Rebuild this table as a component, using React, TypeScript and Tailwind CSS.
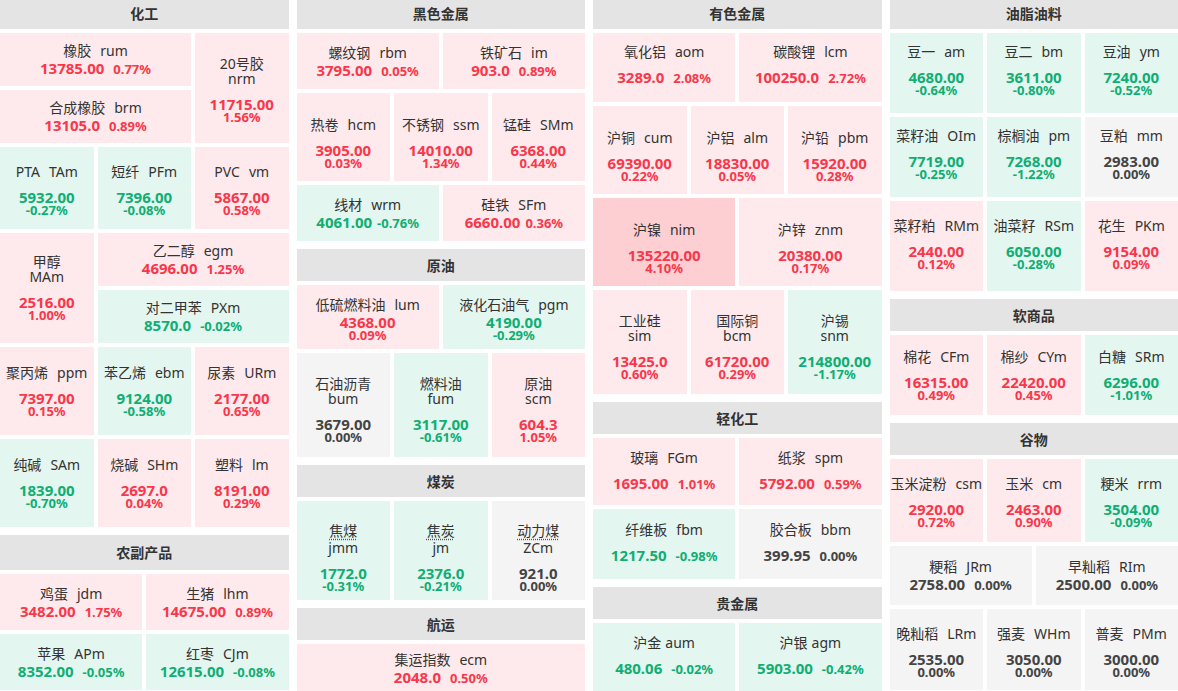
import React from 'react';

type Trend = 'up' | 'down' | 'flat' | 'hot';

interface Q {
  n: string;
  c: string;
  p: string;
  r: string;
  t: Trend;
  stack?: boolean; // name and code on two lines
  inline?: boolean; // price and change on one row
  tight?: boolean; // small gap under the name
  one?: boolean; // single space between name and code
  dot?: boolean; // dotted underline on the name
  ng?: boolean; // narrow gap between price and change
}

const bg: Record<Trend, string> = {
  up: 'bg-[#feeaec]',
  down: 'bg-[#e3f6ef]',
  flat: 'bg-[#f4f4f4]',
  hot: 'bg-[#fdcfd2]',
};

const fg: Record<Trend, string> = {
  up: 'text-[#f8374b]',
  down: 'text-[#0fae74]',
  flat: 'text-[#444444]',
  hot: 'text-[#f8374b]',
};

const Tile = ({ q, pad = '' }: { q: Q; pad?: string }) => (
  <div
    className={`${bg[q.t]} ${pad} flex flex-col items-center justify-center text-center whitespace-nowrap overflow-hidden`}
  >
    <div className="text-[14px] leading-[15px] text-[#333333]">
      {q.stack ? (
        <>
          <div>
            <span className={q.dot ? 'underline decoration-dotted decoration-[#555555] underline-offset-[3px]' : ''}>
              {q.n}
            </span>
          </div>
          <div className={q.dot ? 'mt-[2px]' : ''}>{q.c}</div>
        </>
      ) : (
        <>
          {q.n}
          <span className={q.one ? 'ml-1' : 'ml-[9px]'}>{q.c}</span>
        </>
      )}
    </div>
    {q.inline ? (
      <div
        className={`flex items-baseline font-bold ${fg[q.t]} ${q.tight ? 'mt-1' : 'mt-3'} ${q.ng ? 'gap-[5px]' : 'gap-[9px]'}`}
      >
        <span className="text-[15px] leading-[13px]">{q.p}</span>
        <span className="text-[13px] leading-[13px]">{q.r}</span>
      </div>
    ) : (
      <div className={`flex flex-col items-center font-bold ${fg[q.t]} ${q.tight ? 'mt-1' : 'mt-3'}`}>
        <span className="text-[15px] leading-[13px]">{q.p}</span>
        <span className="text-[13px] leading-[13px]">{q.r}</span>
      </div>
    )}
  </div>
);

const Head = ({ title, h = 'h-8' }: { title: string; h?: string }) => (
  <div className={`${h} flex items-center justify-center bg-[#e4e4e4] text-[14px] font-bold text-[#333333]`}>
    {title}
  </div>
);

const Row = ({ h, cols, items, pad }: { h: string; cols: string; items: Q[]; pad?: string }) => (
  <div className={`grid ${cols} gap-1 ${h}`}>
    {items.map((q) => (
      <Tile key={q.c} q={q} pad={pad} />
    ))}
  </div>
);

const Section = ({ title, h, children }: { title: string; h?: string; children: React.ReactNode }) => (
  <div className="flex flex-col gap-1">
    <Head title={title} h={h} />
    {children}
  </div>
);

const C2 = 'grid-cols-2';
const C3 = 'grid-cols-3';

export default function App() {
  return (
    <div className="h-[691px] overflow-hidden bg-white font-['Noto_Sans','Noto_Sans_CJK_SC',sans-serif]">
      <div className="grid grid-cols-4 gap-x-2 -mt-[3px] items-start">
        {/* 化工 + 农副产品 */}
        <div className="flex flex-col gap-2">
          <Section title="化工">
            <div className="grid grid-cols-3 gap-1 h-[110px]">
              <div className="col-span-2 grid grid-rows-2 gap-1">
                <Tile q={{ n: '橡胶', c: 'rum', p: '13785.00', r: '0.77%', t: 'up', inline: true, tight: true }} />
                <Tile q={{ n: '合成橡胶', c: 'brm', p: '13105.0', r: '0.89%', t: 'up', inline: true, tight: true }} />
              </div>
              <Tile q={{ n: '20号胶', c: 'nrm', p: '11715.00', r: '1.56%', t: 'up', stack: true }} pad="pt-[3px]" />
            </div>
            <Row
              h="h-[82px]"
              cols={C3}
              pad="pt-[5px]"
              items={[
                { n: 'PTA', c: 'TAm', p: '5932.00', r: '-0.27%', t: 'down' },
                { n: '短纤', c: 'PFm', p: '7396.00', r: '-0.08%', t: 'down' },
                { n: 'PVC', c: 'vm', p: '5867.00', r: '0.58%', t: 'up' },
              ]}
            />
            <div className="grid grid-cols-3 gap-1 h-[110px]">
              <Tile q={{ n: '甲醇', c: 'MAm', p: '2516.00', r: '1.00%', t: 'up', stack: true }} />
              <div className="col-span-2 grid grid-rows-2 gap-1">
                <Tile q={{ n: '乙二醇', c: 'egm', p: '4696.00', r: '1.25%', t: 'up', inline: true, tight: true }} />
                <Tile q={{ n: '对二甲苯', c: 'PXm', p: '8570.0', r: '-0.02%', t: 'down', inline: true, tight: true }} />
              </div>
            </div>
            <Row
              h="h-[88px]"
              cols={C3}
              items={[
                { n: '聚丙烯', c: 'ppm', p: '7397.00', r: '0.15%', t: 'up' },
                { n: '苯乙烯', c: 'ebm', p: '9124.00', r: '-0.58%', t: 'down' },
                { n: '尿素', c: 'URm', p: '2177.00', r: '0.65%', t: 'up' },
              ]}
            />
            <Row
              h="h-[88px]"
              cols={C3}
              items={[
                { n: '纯碱', c: 'SAm', p: '1839.00', r: '-0.70%', t: 'down' },
                { n: '烧碱', c: 'SHm', p: '2697.0', r: '0.04%', t: 'up' },
                { n: '塑料', c: 'lm', p: '8191.00', r: '0.29%', t: 'up' },
              ]}
            />
          </Section>
          <Section title="农副产品" h="h-[35px]">
            <Row
              h="h-[56px]"
              cols={C2}
              items={[
                { n: '鸡蛋', c: 'jdm', p: '3482.00', r: '1.75%', t: 'up', inline: true, tight: true },
                { n: '生猪', c: 'lhm', p: '14675.00', r: '0.89%', t: 'up', inline: true, tight: true },
              ]}
            />
            <Row
              h="h-[56px]"
              cols={C2}
              items={[
                { n: '苹果', c: 'APm', p: '8352.00', r: '-0.05%', t: 'down', inline: true, tight: true },
                { n: '红枣', c: 'CJm', p: '12615.00', r: '-0.08%', t: 'down', inline: true, tight: true },
              ]}
            />
          </Section>
        </div>

        {/* 黑色金属 + 原油 + 煤炭 + 航运 */}
        <div className="flex flex-col gap-2">
          <Section title="黑色金属">
            <Row
              h="h-[56px]"
              cols={C2}
              items={[
                { n: '螺纹钢', c: 'rbm', p: '3795.00', r: '0.05%', t: 'up', inline: true, tight: true },
                { n: '铁矿石', c: 'im', p: '903.0', r: '0.89%', t: 'up', inline: true, tight: true },
              ]}
            />
            <Row
              h="h-[88px]"
              cols={C3}
              pad="pt-3"
              items={[
                { n: '热卷', c: 'hcm', p: '3905.00', r: '0.03%', t: 'up' },
                { n: '不锈钢', c: 'ssm', p: '14010.00', r: '1.34%', t: 'up' },
                { n: '锰硅', c: 'SMm', p: '6368.00', r: '0.44%', t: 'up' },
              ]}
            />
            <Row
              h="h-[56px]"
              cols={C2}
              items={[
                { n: '线材', c: 'wrm', p: '4061.00', r: '-0.76%', t: 'down', inline: true, tight: true, ng: true },
                { n: '硅铁', c: 'SFm', p: '6660.00', r: '0.36%', t: 'up', inline: true, tight: true, ng: true },
              ]}
            />
          </Section>
          <Section title="原油">
            <Row
              h="h-[64px]"
              cols={C2}
              pad="pt-[5px]"
              items={[
                { n: '低硫燃料油', c: 'lum', p: '4368.00', r: '0.09%', t: 'up', tight: true },
                { n: '液化石油气', c: 'pgm', p: '4190.00', r: '-0.29%', t: 'down', tight: true },
              ]}
            />
            <Row
              h="h-[104px]"
              cols={C3}
              pad="pt-[10px]"
              items={[
                { n: '石油沥青', c: 'bum', p: '3679.00', r: '0.00%', t: 'flat', stack: true },
                { n: '燃料油', c: 'fum', p: '3117.00', r: '-0.61%', t: 'down', stack: true },
                { n: '原油', c: 'scm', p: '604.3', r: '1.05%', t: 'up', stack: true },
              ]}
            />
          </Section>
          <Section title="煤炭">
            <Row
              h="h-[99px]"
              cols={C3}
              pad="pt-[14px]"
              items={[
                { n: '焦煤', c: 'jmm', p: '1772.0', r: '-0.31%', t: 'down', stack: true, dot: true },
                { n: '焦炭', c: 'jm', p: '2376.0', r: '-0.21%', t: 'down', stack: true, dot: true },
                { n: '动力煤', c: 'ZCm', p: '921.0', r: '0.00%', t: 'flat', stack: true, dot: true },
              ]}
            />
          </Section>
          <Section title="航运">
            <Row
              h="h-[48px]"
              cols="grid-cols-1"
              items={[{ n: '集运指数', c: 'ecm', p: '2048.0', r: '0.50%', t: 'up', inline: true, tight: true }]}
            />
          </Section>
        </div>

        {/* 有色金属 + 轻化工 + 贵金属 */}
        <div className="flex flex-col gap-2">
          <Section title="有色金属">
            <Row
              h="h-[69px]"
              cols={C2}
              pad="pb-[6px]"
              items={[
                { n: '氧化铝', c: 'aom', p: '3289.0', r: '2.08%', t: 'up', inline: true },
                { n: '碳酸锂', c: 'lcm', p: '100250.0', r: '2.72%', t: 'up', inline: true },
              ]}
            />
            <Row
              h="h-[88px]"
              cols={C3}
              pad="pt-3"
              items={[
                { n: '沪铜', c: 'cum', p: '69390.00', r: '0.22%', t: 'up' },
                { n: '沪铝', c: 'alm', p: '18830.00', r: '0.05%', t: 'up' },
                { n: '沪铅', c: 'pbm', p: '15920.00', r: '0.28%', t: 'up' },
              ]}
            />
            <Row
              h="h-[88px]"
              cols={C2}
              pad="pt-3"
              items={[
                { n: '沪镍', c: 'nim', p: '135220.00', r: '4.10%', t: 'hot' },
                { n: '沪锌', c: 'znm', p: '20380.00', r: '0.17%', t: 'up' },
              ]}
            />
            <Row
              h="h-[104px]"
              cols={C3}
              pad="pt-[10px]"
              items={[
                { n: '工业硅', c: 'sim', p: '13425.0', r: '0.60%', t: 'up', stack: true },
                { n: '国际铜', c: 'bcm', p: '61720.00', r: '0.29%', t: 'up', stack: true },
                { n: '沪锡', c: 'snm', p: '214800.00', r: '-1.17%', t: 'down', stack: true },
              ]}
            />
          </Section>
          <Section title="轻化工">
            <Row
              h="h-[67px]"
              cols={C2}
              pad="pb-[2px]"
              items={[
                { n: '玻璃', c: 'FGm', p: '1695.00', r: '1.01%', t: 'up', inline: true },
                { n: '纸浆', c: 'spm', p: '5792.00', r: '0.59%', t: 'up', inline: true },
              ]}
            />
            <Row
              h="h-[70px]"
              cols={C2}
              pad="pb-[4px]"
              items={[
                { n: '纤维板', c: 'fbm', p: '1217.50', r: '-0.98%', t: 'down', inline: true },
                { n: '胶合板', c: 'bbm', p: '399.95', r: '0.00%', t: 'flat', inline: true },
              ]}
            />
          </Section>
          <Section title="贵金属">
            <Row
              h="h-[70px]"
              cols={C2}
              pad="pb-[6px]"
              items={[
                { n: '沪金', c: 'aum', p: '480.06', r: '-0.02%', t: 'down', inline: true, one: true },
                { n: '沪银', c: 'agm', p: '5903.00', r: '-0.42%', t: 'down', inline: true, one: true },
              ]}
            />
          </Section>
        </div>

        {/* 油脂油料 + 软商品 + 谷物 */}
        <div className="flex flex-col gap-2">
          <Section title="油脂油料">
            <Row
              h="h-[80px]"
              cols={C3}
              pad="pb-[6px]"
              items={[
                { n: '豆一', c: 'am', p: '4680.00', r: '-0.64%', t: 'down' },
                { n: '豆二', c: 'bm', p: '3611.00', r: '-0.80%', t: 'down' },
                { n: '豆油', c: 'ym', p: '7240.00', r: '-0.52%', t: 'down' },
              ]}
            />
            <Row
              h="h-[80px]"
              cols={C3}
              pad="pb-[6px]"
              items={[
                { n: '菜籽油', c: 'OIm', p: '7719.00', r: '-0.25%', t: 'down' },
                { n: '棕榈油', c: 'pm', p: '7268.00', r: '-1.22%', t: 'down' },
                { n: '豆粕', c: 'mm', p: '2983.00', r: '0.00%', t: 'flat' },
              ]}
            />
            <Row
              h="h-[90px]"
              cols={C3}
              pad="pb-[4px]"
              items={[
                { n: '菜籽粕', c: 'RMm', p: '2440.00', r: '0.12%', t: 'up' },
                { n: '油菜籽', c: 'RSm', p: '6050.00', r: '-0.28%', t: 'down' },
                { n: '花生', c: 'PKm', p: '9154.00', r: '0.09%', t: 'up' },
              ]}
            />
          </Section>
          <Section title="软商品">
            <Row
              h="h-[80px]"
              cols={C3}
              items={[
                { n: '棉花', c: 'CFm', p: '16315.00', r: '0.49%', t: 'up' },
                { n: '棉纱', c: 'CYm', p: '22420.00', r: '0.45%', t: 'up' },
                { n: '白糖', c: 'SRm', p: '6296.00', r: '-1.01%', t: 'down' },
              ]}
            />
          </Section>
          <Section title="谷物">
            <Row
              h="h-[83px]"
              cols={C3}
              pad="pt-[4px]"
              items={[
                { n: '玉米淀粉', c: 'csm', p: '2920.00', r: '0.72%', t: 'up' },
                { n: '玉米', c: 'cm', p: '2463.00', r: '0.90%', t: 'up' },
                { n: '粳米', c: 'rrm', p: '3504.00', r: '-0.09%', t: 'down' },
              ]}
            />
            <Row
              h="h-[59px]"
              cols={C2}
              items={[
                { n: '粳稻', c: 'JRm', p: '2758.00', r: '0.00%', t: 'flat', inline: true, tight: true },
                { n: '早籼稻', c: 'RIm', p: '2500.00', r: '0.00%', t: 'flat', inline: true, tight: true },
              ]}
            />
            <Row
              h="h-[81px]"
              cols={C3}
              pad="pt-[6px]"
              items={[
                { n: '晚籼稻', c: 'LRm', p: '2535.00', r: '0.00%', t: 'flat' },
                { n: '强麦', c: 'WHm', p: '3050.00', r: '0.00%', t: 'flat' },
                { n: '普麦', c: 'PMm', p: '3000.00', r: '0.00%', t: 'flat' },
              ]}
            />
          </Section>
        </div>
      </div>
    </div>
  );
}
